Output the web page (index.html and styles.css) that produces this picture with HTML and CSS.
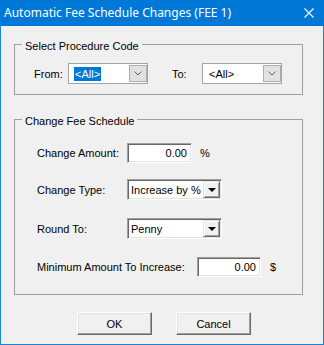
FILE: index.html
```
<!DOCTYPE html>
<html>

<head>
	<title>Automatic Fee Schedule Changes</title>
	<link rel="stylesheet" href="styles.css">
</head>

<body>
	<div class="window">
		<div class="titlebar">
			<span class="title">Automatic Fee Schedule Changes (FEE 1)</span>
			<svg class="close" width="10" height="10" viewBox="0 0 10 10">
				<path d="M0.5 0.5 L9.5 9.5 M9.5 0.5 L0.5 9.5" stroke="#fff" stroke-width="1.1" fill="none" />
			</svg>
		</div>

		<div class="dialog-body">
			<fieldset class="group group-codes">
				<legend>Select Procedure Code</legend>
				<div class="code-row">
					<span class="label label-from">From:</span>
					<div class="flat-combo">
						<span class="combo-text"><span class="selected">&lt;All&gt;</span></span>
						<span class="flat-button">
							<svg width="8" height="5" viewBox="0 0 8 5">
								<polyline points="0.5,0.5 4,4 7.5,0.5" stroke="#606060" fill="none" />
							</svg>
						</span>
					</div>
					<span class="label label-to">To:</span>
					<div class="flat-combo">
						<span class="combo-text"><span class="plain">&lt;All&gt;</span></span>
						<span class="flat-button">
							<svg width="8" height="5" viewBox="0 0 8 5">
								<polyline points="0.5,0.5 4,4 7.5,0.5" stroke="#606060" fill="none" />
							</svg>
						</span>
					</div>
				</div>
			</fieldset>

			<fieldset class="group group-fee">
				<legend>Change Fee Schedule</legend>

				<div class="fee-row row-amount">
					<span class="label label-fee">Change Amount:</span>
					<div class="sunken-input">0.00</div>
					<span class="unit">%</span>
				</div>

				<div class="fee-row row-type">
					<span class="label label-fee">Change Type:</span>
					<div class="classic-combo">
						<span class="combo-text">Increase by %</span>
						<span class="classic-button"><span class="arrow-down"></span></span>
					</div>
				</div>

				<div class="fee-row row-round">
					<span class="label label-fee">Round To:</span>
					<div class="classic-combo">
						<span class="combo-text">Penny</span>
						<span class="classic-button"><span class="arrow-down"></span></span>
					</div>
				</div>

				<div class="fee-row row-minimum">
					<span class="label label-min">Minimum Amount To Increase:</span>
					<div class="sunken-input">0.00</div>
					<span class="unit unit-dollar">$</span>
				</div>
			</fieldset>

			<div class="buttons">
				<button class="push-button">OK</button>
				<button class="push-button">Cancel</button>
			</div>
		</div>
	</div>
</body>

</html>
```

FILE: styles.css
```
body {
	margin: 0;
	padding: 0;
	background-color: #f0f0f0;
	font-family: "Liberation Sans", Arial, sans-serif;
	font-size: 11px;
	color: #000;
}

.window {
	width: 324px;
	height: 345px;
	box-sizing: border-box;
	border: 1px solid #1883d7;
	border-top: none;
	background-color: #f0f0f0;
}

.titlebar {
	height: 26px;
	margin: 0 -1px;
	padding: 0 10px 0 4px;
	background-color: #0078d7;
	color: #fff;
	display: flex;
	align-items: center;
	justify-content: space-between;
}

.title {
	font-family: "Noto Sans", sans-serif;
	font-size: 12px;
	line-height: 16px;
}

.close {
	display: block;
}

.dialog-body {
	padding: 10px 0 0 13px;
}

/* group boxes */
.group {
	width: 289px;
	box-sizing: border-box;
	margin: 0;
	padding: 0;
	border: 1px solid #a0a0a0;
	min-width: 0;
}

.group legend {
	margin-left: 7px;
	padding: 4px 3px 0;
	line-height: 13px;
}

.group-codes {
	padding: 10px 0 10px 0;
}

.group-fee {
	margin-top: 16px;
	padding: 14px 0 17px 0;
}

.label {
	display: inline-block;
	white-space: nowrap;
}

/* procedure code row */
.code-row {
	display: flex;
	align-items: center;
	height: 21px;
	padding-left: 19px;
}

.label-from {
	width: 34px;
}

.label-to {
	width: 30px;
	margin-left: 24px;
}

.flat-combo {
	width: 80px;
	height: 21px;
	box-sizing: border-box;
	border: 1px solid #a5a5a5;
	background-color: #fff;
	display: flex;
	align-items: center;
}

.flat-combo .combo-text {
	flex: 1;
	padding-left: 5px;
}

.selected {
	display: inline-block;
	background-color: #0078d7;
	color: #fff;
	line-height: 14px;
	padding: 0 1px;
}

.plain {
	display: inline-block;
	padding: 0 1px;
}

.flat-button {
	width: 18px;
	height: 17px;
	box-sizing: border-box;
	border: 1px solid #adadad;
	background-color: #e1e1e1;
	display: flex;
	align-items: center;
	justify-content: center;
}

.flat-button svg {
	display: block;
}

/* fee rows */
.fee-row {
	display: flex;
	align-items: center;
	height: 21px;
	padding-left: 22px;
}

.row-type {
	margin-top: 16px;
}

.row-round {
	margin-top: 18px;
}

.row-minimum {
	margin-top: 17px;
}

.label-fee {
	width: 90px;
}

.label-min {
	width: 160px;
}

.sunken-input {
	width: 65px;
	height: 20px;
	box-sizing: border-box;
	border: 1px solid;
	border-color: #a0a0a0 #fff #fff #a0a0a0;
	box-shadow: inset 1px 1px #696969, inset -1px -1px #e3e3e3;
	background-color: #fff;
	text-align: right;
	padding-right: 4px;
	line-height: 18px;
}

.row-minimum .sunken-input {
	width: 64px;
}

.unit {
	margin-left: 8px;
}

.unit-dollar {
	margin-left: 9px;
}

.classic-combo {
	width: 95px;
	height: 21px;
	box-sizing: border-box;
	border: 1px solid;
	border-color: #a0a0a0 #fff #fff #a0a0a0;
	box-shadow: inset 1px 1px #696969, inset -1px -1px #e3e3e3;
	background-color: #fff;
	display: flex;
	align-items: center;
	padding: 1px;
}

.classic-combo .combo-text {
	flex: 1;
	padding-left: 2px;
	white-space: nowrap;
}

.classic-button {
	width: 17px;
	height: 17px;
	box-sizing: border-box;
	background-color: #f0f0f0;
	border: 1px solid;
	border-color: #e3e3e3 #696969 #696969 #e3e3e3;
	box-shadow: inset 1px 1px #fff, inset -1px -1px #a0a0a0;
	display: flex;
	align-items: center;
	justify-content: center;
}

.arrow-down {
	width: 0;
	height: 0;
	border-style: solid;
	border-width: 4px 4px 0 4px;
	border-color: #000 transparent transparent transparent;
}

/* buttons */
.buttons {
	display: flex;
	gap: 24px;
	margin-top: 17px;
	padding-left: 63px;
}

.push-button {
	width: 75px;
	height: 23px;
	box-sizing: border-box;
	margin: 0;
	padding: 0;
	font-family: "Liberation Sans", Arial, sans-serif;
	font-size: 11px;
	color: #000;
	background-color: #f0f0f0;
	border: 1px solid;
	border-color: #fff #696969 #696969 #fff;
	box-shadow: inset -1px -1px #a0a0a0, inset 1px 1px #e3e3e3;
	border-radius: 0;
}
```
